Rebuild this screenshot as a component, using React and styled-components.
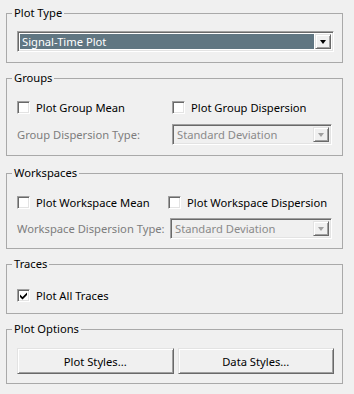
import React from "react";
import styled, { createGlobalStyle } from "styled-components";

const GlobalStyle = createGlobalStyle`
  html, body {
    margin: 0;
    padding: 0;
    background: #f0f0f0;
  }
  body {
    font-family: "Noto Sans", "Open Sans", sans-serif;
    font-size: 11.2px;
    color: #000;
  }
`;

const Panel = styled.div`
  width: 337px;
  padding: 13px 0 0 6px;
  display: flex;
  flex-direction: column;
`;

const Group = styled.div`
  position: relative;
  border: 1px solid #a9a9a9;
  padding: ${(p) => p.$pad || "17px 9px 9px 10px"};
  margin-top: ${(p) => p.$top || 0}px;
  display: flex;
  flex-direction: column;
  gap: ${(p) => p.$gap || 8}px;
`;

const Legend = styled.span`
  position: absolute;
  top: -9px;
  left: 5px;
  padding: 0 2px;
  background: #f0f0f0;
  line-height: 16px;
  white-space: nowrap;
`;

const Row = styled.div`
  display: grid;
  grid-template-columns: ${(p) => p.$col || 155}px 1fr;
  align-items: center;
  height: ${(p) => p.$h || 17}px;
`;

const CheckLabel = styled.label`
  display: flex;
  align-items: center;
  gap: 6px;
  white-space: nowrap;
`;

const Box = styled.span`
  box-sizing: border-box;
  width: 13px;
  height: 13px;
  background: #fff;
  border-top: 1px solid #a0a0a0;
  border-left: 1px solid #a0a0a0;
  border-right: 1px solid #fff;
  border-bottom: 1px solid #fff;
  box-shadow: inset 1px 1px 0 #696969, inset -1px -1px 0 #e3e3e3;
  display: flex;
  align-items: center;
  justify-content: center;
  flex-shrink: 0;
`;

const Gray = styled.span`
  color: #7d7d7d;
  white-space: nowrap;
`;

const Combo = styled.div`
  box-sizing: border-box;
  height: 21px;
  border-top: 1px solid #a0a0a0;
  border-left: 1px solid #a0a0a0;
  border-right: 1px solid #fff;
  border-bottom: 1px solid #fff;
  box-shadow: inset 1px 1px 0 #696969, inset -1px -1px 0 #e3e3e3;
  background: ${(p) => (p.$disabled ? "#f0f0f0" : "#fff")};
  padding: 2px;
  display: flex;
  gap: 1px;
`;

const ComboText = styled.div`
  flex: 1;
  display: flex;
  align-items: center;
  padding-left: 2px;
  background: ${(p) => (p.$selected ? "#607682" : "transparent")};
  color: ${(p) => (p.$selected ? "#fff" : "#8a8a8a")};
  white-space: nowrap;
  overflow: hidden;
`;

const Raised = `
  box-sizing: border-box;
  background: #f0f0f0;
  border-top: 1px solid #e3e3e3;
  border-left: 1px solid #e3e3e3;
  border-right: 1px solid #696969;
  border-bottom: 1px solid #696969;
  box-shadow: inset 1px 1px 0 #fff, inset -1px -1px 0 #a0a0a0;
`;

const ComboButton = styled.div`
  ${Raised}
  width: 16px;
  display: flex;
  align-items: center;
  justify-content: center;
`;

const Arrow = styled.span`
  width: 0;
  height: 0;
  border-left: 3.5px solid transparent;
  border-right: 3.5px solid transparent;
  border-top: 4px solid ${(p) => (p.$disabled ? "#a0a0a0" : "#000")};
  margin-top: 1px;
`;

const ButtonRow = styled.div`
  display: grid;
  grid-template-columns: 1fr 1fr;
  gap: 4px;
`;

const Button = styled.button`
  ${Raised}
  height: 26px;
  font-family: inherit;
  font-size: 11.2px;
  color: #000;
  padding: 0;
`;

const Check = () => (
  <svg width="9" height="9" viewBox="0 0 9 9">
    <path d="M1 3.5 L3.5 6 L8 1.5 L8 4 L3.5 8.5 L1 6 Z" fill="#000" />
  </svg>
);

const Checkbox = ({ checked, children }) => (
  <CheckLabel>
    <Box>{checked && <Check />}</Box>
    {children}
  </CheckLabel>
);

const Select = ({ value, disabled }) => (
  <Combo $disabled={disabled}>
    <ComboText $selected={!disabled}>{value}</ComboText>
    <ComboButton>
      <Arrow $disabled={disabled} />
    </ComboButton>
  </Combo>
);

export default function App() {
  return (
    <>
      <GlobalStyle />
      <Panel>
        <Group $pad="17px 8px 10px 10px">
          <Legend>Plot Type</Legend>
          <Select value="Signal-Time Plot" />
        </Group>

        <Group $top={15} $pad="20px 10px 10px 10px" $gap={8}>
          <Legend>Groups</Legend>
          <Row $col={155}>
            <Checkbox>Plot Group Mean</Checkbox>
            <Checkbox>Plot Group Dispersion</Checkbox>
          </Row>
          <Row $col={155} $h={21}>
            <Gray>Group Dispersion Type:</Gray>
            <Select value="Standard Deviation" disabled />
          </Row>
        </Group>

        <Group $top={17} $pad="20px 10px 9px 10px" $gap={7}>
          <Legend>Workspaces</Legend>
          <Row $col={151}>
            <Checkbox>Plot Workspace Mean</Checkbox>
            <Checkbox>Plot Workspace Dispersion</Checkbox>
          </Row>
          <Row $col={153} $h={21}>
            <Gray>Workspace Dispersion Type:</Gray>
            <Select value="Standard Deviation" disabled />
          </Row>
        </Group>

        <Group $top={15} $pad="22px 10px 9px 10px">
          <Legend>Traces</Legend>
          <Row>
            <Checkbox checked>Plot All Traces</Checkbox>
          </Row>
        </Group>

        <Group $top={15} $pad="18px 8px 9px 10px">
          <Legend>Plot Options</Legend>
          <ButtonRow>
            <Button>Plot Styles...</Button>
            <Button>Data Styles...</Button>
          </ButtonRow>
        </Group>
      </Panel>
    </>
  );
}
